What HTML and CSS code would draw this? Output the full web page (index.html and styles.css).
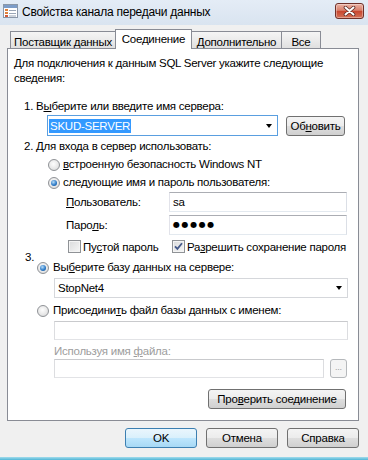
FILE: index.html
```html
<!DOCTYPE html>
<html lang="ru">
<head>
  <meta charset="UTF-8">
  <title>Свойства канала передачи данных</title>
  <link rel="stylesheet" href="styles.css">
</head>
<body>
<div class="window">
  <div class="titlebar">
    <svg class="app-icon" width="15" height="14" viewBox="0 0 15 14">
      <rect x="0.5" y="0.5" width="14" height="13" fill="#fff" stroke="#8a97a8"/>
      <rect x="1" y="1" width="13" height="3" fill="#7c9cc8"/>
      <rect x="2" y="5" width="3" height="2" fill="#e0803a"/>
      <rect x="2" y="8" width="3" height="2" fill="#e0803a"/>
      <rect x="2" y="11" width="3" height="2" fill="#d05a3a"/>
      <path d="M6 6.5h7M6 9.5h7M6 12h7" stroke="#9aa6b6"/>
    </svg>
    <span class="title">Свойства канала передачи данных</span>
    <div class="close-btn">
      <svg width="13" height="10" viewBox="0 0 13 10">
        <path d="M2.5 1.5l8 7M10.5 1.5l-8 7" stroke="#5a2a25" stroke-width="3.6" stroke-linecap="round"/>
        <path d="M2.5 1.5l8 7M10.5 1.5l-8 7" stroke="#fff" stroke-width="2" stroke-linecap="round"/>
      </svg>
    </div>
  </div>

  <div class="tabs">
    <div class="tab first">Поставщик данных</div>
    <div class="tab active">Соединение</div>
    <div class="tab">Дополнительно</div>
    <div class="tab">Все</div>
  </div>

  <div class="panel">
    <p class="intro">Для подключения к данным SQL Server укажите следующие<br>сведения:</p>

    <div class="step step1">1. В<u>ы</u>берите или введите имя сервера:</div>
    <div class="server-row">
      <div class="combo focus"><span class="selected">SKUD-SERVER</span><i class="arrow"></i></div>
      <div class="btn refresh">Об<u>н</u>овить</div>
    </div>

    <div class="step step2">2. Для входа в сервер использовать:</div>
    <div class="opt auth"><span class="radio"></span><u>в</u>строенную безопасность Windows NT</div>
    <div class="opt auth"><span class="radio on"></span>сле<u>д</u>ующие имя и пароль пользователя:</div>
    <div class="field"><span class="field-label"><u>П</u>ользователь:</span><div class="input user">sa</div></div>
    <div class="field"><span class="field-label">Паро<u>л</u>ь:</span><div class="input user dots">●●●●●</div></div>
    <div class="checks">
      <div class="check-item blank"><span class="checkbox"></span>Пу<u>с</u>той пароль</div>
      <div class="check-item"><span class="checkbox"><svg width="9" height="9" viewBox="0 0 9 9"><path d="M1 4.3l2.4 2.6L8 1.2" fill="none" stroke="#45598a" stroke-width="1.8"/></svg></span>Ра<u>з</u>решить сохранение пароля</div>
    </div>

    <div class="step step3">3.</div>
    <div class="opt db"><span class="radio on"></span>Вы<u>б</u>ерите базу данных на сервере:</div>
    <div class="combo list"><span>StopNet4</span><i class="arrow"></i></div>
    <div class="opt db attach"><span class="radio"></span>Присоедини<u>т</u>ь файл базы данных с именем:</div>
    <div class="input wide disabled"></div>
    <div class="muted">Используя имя <u>ф</u>айла:</div>
    <div class="file-row">
      <div class="input file disabled"></div>
      <div class="btn browse">...</div>
    </div>
    <div class="test-row"><div class="btn test">Про<u>в</u>ерить соединение</div></div>
  </div>

  <div class="actions">
    <div class="btn default">OK</div>
    <div class="btn">Отмена</div>
    <div class="btn">Справка</div>
  </div>
  <div class="frame-bottom"></div>
</div>
</body>
</html>
```

FILE: styles.css
```css
* { box-sizing: border-box; }

body {
  margin: 0;
  background: #f0f0f0;
  font-family: "Liberation Sans", Arial, sans-serif;
  font-size: 11.5px;
  letter-spacing: -0.25px;
  color: #000;
}

.window {
  width: 368px;
  height: 460px;
  display: flex;
  flex-direction: column;
  background: #f0f0f0;
  overflow: hidden;
}

/* title bar */
.titlebar {
  flex: none;
  height: 25px;
  display: flex;
  align-items: flex-start;
  background: linear-gradient(#e4ecf6, #d9e4f0);
}
.app-icon { margin: 4px 0 0 3px; }
.title {
  margin: 5px 0 0 4px;
  font-size: 12px;
  line-height: 15px;
  color: #000;
}
.close-btn {
  margin: 3px 4px 0 auto;
  width: 29px;
  height: 16px;
  border: 1px solid #6f3029;
  border-radius: 3px;
  background: linear-gradient(#ebb2a4, #d9806c 45%, #c8462f 52%, #d47258);
  box-shadow: inset 0 0 0 1px rgba(255,255,255,0.35);
  display: flex;
  align-items: center;
  justify-content: center;
}

/* tabs */
.tabs {
  flex: none;
  height: 23px;
  display: flex;
  align-items: flex-end;
  padding-left: 10px;
}
.tab {
  height: 17px;
  padding-top: 3px;
  line-height: 15px;
  text-align: center;
  border: 1px solid #898c95;
  border-bottom: none;
  border-left: none;
  background: linear-gradient(#f5f5f5, #ebebeb 50%, #e0e0e0);
  white-space: nowrap;
}
.tab.first { width: 105px; border-left: 1px solid #898c95; border-right: none; }
.tab.active {
  position: relative;
  z-index: 1;
  width: 77px;
  height: 20px;
  padding-top: 2px;
  margin-bottom: -1px;
  border-left: 1px solid #898c95;
  background: #fff;
}
.tab:nth-child(3) { width: 90px; }
.tab:nth-child(4) { width: 39px; }

/* panel */
.panel {
  flex: none;
  height: 373px;
  margin: 0 9px 0 7px;
  padding: 7px 0 0 6px;
  border: 1px solid #898c95;
  background: #fff;
}
.intro { margin: 0; line-height: 15px; }

.step { line-height: 15px; margin-left: 10px; }
.step1 { margin-top: 13px; }
.step2 { margin-top: 3px; }
.step3 { margin: -4px 0 0 11px; height: 10px; }

.server-row {
  display: flex;
  align-items: center;
  height: 21px;
  margin: 1px 0 0 33px;
}

.combo {
  display: flex;
  align-items: center;
  background: #fff;
  border: 1px solid #c5c9cf;
}
.combo.focus {
  width: 231px;
  height: 21px;
  padding-left: 1px;
  border-color: #5a9fe0;
}
.selected {
  background: #3399ff;
  color: #fff;
  line-height: 14px;
  padding: 0 1px;
}
.combo.list {
  width: 294px;
  height: 20px;
  margin: 3px 0 0 40px;
  padding-left: 3px;
  border-color: #d5d7db;
}
.arrow {
  margin: 0 5px 0 auto;
  border-left: 3.5px solid transparent;
  border-right: 3.5px solid transparent;
  border-top: 4px solid #000;
}

/* radio / checkbox */
.opt {
  display: flex;
  align-items: center;
  height: 15px;
  line-height: 15px;
  margin-top: 3px;
}
.opt.auth { margin-left: 34px; }
.opt.db { margin: 0 0 0 23px; }
.opt.attach { margin-top: 5px; }

.radio {
  width: 12px;
  height: 12px;
  margin-right: 3px;
  border-radius: 50%;
  border: 1px solid #8f9296;
  background: radial-gradient(circle at 45% 40%, #fdfdfd, #e8e8e8 55%, #cfd0d2);
  display: flex;
  align-items: center;
  justify-content: center;
}
.opt.db .radio { margin-right: 4px; }
.radio.on::after {
  content: "";
  width: 6px;
  height: 6px;
  border-radius: 50%;
  background: radial-gradient(circle at 40% 35%, #b9def8, #2f7cc8 55%, #0d4c8f);
}

.field {
  display: flex;
  align-items: center;
  height: 20px;
  margin: 2px 0 0 52px;
}
.field + .field { margin-top: 3px; }
.field-label { width: 103px; }

.input {
  background: #fff;
  border: 1px solid;
  border-color: #abadb3 #dbdfe6 #e3e9ef #e2e3ea;
}
.input.user {
  width: 178px;
  height: 20px;
  padding-left: 3px;
  line-height: 18px;
}
.input.dots {
  font-family: "DejaVu Sans", sans-serif;
  font-size: 8px;
  letter-spacing: 1.6px;
}
.input.disabled { border-color: #c9cacd #dcdde0 #e2e3e6 #dcdde0; }
.input.wide { width: 294px; height: 19px; margin: 3px 0 0 40px; }

.checks {
  display: flex;
  align-items: center;
  height: 15px;
  margin: 4px 0 0 54px;
}
.check-item { display: flex; align-items: center; }
.check-item.blank { width: 104px; }
.checkbox {
  width: 13px;
  height: 13px;
  margin-right: 2px;
  border: 1px solid #8f9296;
  background: linear-gradient(135deg, #dadbdc, #f6f6f6);
  box-shadow: inset 0 0 0 1px #f4f4f4;
  display: flex;
  align-items: center;
  justify-content: center;
}

.muted {
  margin: 4px 0 0 40px;
  line-height: 15px;
  color: #9d9d9d;
}
.file-row {
  display: flex;
  height: 19px;
  margin-left: 40px;
}
.input.file { width: 270px; height: 19px; }

/* buttons */
.btn {
  display: flex;
  align-items: center;
  justify-content: center;
  color: #000;
  border: 1px solid #707070;
  border-radius: 3px;
  background: linear-gradient(#f4f4f4, #ececec 50%, #dedede 51%, #d0d0d0);
}
.refresh { width: 59px; height: 20px; margin-left: 8px; }
.browse {
  width: 17px;
  height: 19px;
  margin-left: 6px;
  padding-bottom: 3px;
  color: #a0a0a0;
  border-color: #b5b8bb;
  background: #f4f4f4;
  font-size: 9px;
}
.test-row { display: flex; margin: 11px 0 0 194px; }
.test { width: 138px; height: 20px; }

.actions {
  flex: none;
  display: flex;
  justify-content: flex-end;
  gap: 9px;
  padding-right: 9px;
  margin-top: 7px;
}
.actions .btn { width: 72px; height: 20px; }
.btn.default {
  border-color: #3c7fb1;
  background: linear-gradient(#eaf6fd, #d9f0fc 50%, #bee6fd 51%, #a7d9f5);
}

.frame-bottom {
  margin-top: auto;
  height: 3px;
  background: linear-gradient(#a3dcec, #4fb5d6);
}
```
